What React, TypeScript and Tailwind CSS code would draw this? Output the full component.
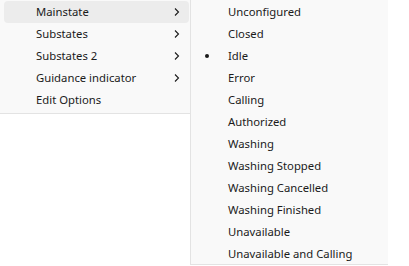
import React from "react";

const mainItems = [
  { label: "Mainstate", sub: true, active: true },
  { label: "Substates", sub: true },
  { label: "Substates 2", sub: true },
  { label: "Guidance indicator", sub: true },
  { label: "Edit Options", sub: false },
];

const stateItems = [
  "Unconfigured",
  "Closed",
  "Idle",
  "Error",
  "Calling",
  "Authorized",
  "Washing",
  "Washing Stopped",
  "Washing Cancelled",
  "Washing Finished",
  "Unavailable",
  "Unavailable and Calling",
];

const Chevron: React.FC = () => (
  <svg width="8" height="10" viewBox="0 0 8 10" className="text-[#1b1b1b]">
    <path d="M2 1.5 L5.5 5 L2 8.5" fill="none" stroke="currentColor" strokeWidth="1.1" />
  </svg>
);

const App: React.FC = () => {
  const selected = "Idle";
  return (
    <div
      className="flex items-start w-[409px] h-[266px] bg-white text-[11.3px] text-[#1b1b1b]"
      style={{ fontFamily: '"Segoe UI", "Noto Sans", sans-serif' }}
    >
      {/* main menu */}
      <div className="w-[190px] h-[114px] bg-[#f9f9f9] border-b border-[#e3e3e3] pt-px">
        {mainItems.map((item) => (
          <div
            key={item.label}
            className={`ml-1 mr-px h-[22px] flex items-center justify-between pl-8 pr-2 rounded ${
              item.active ? "bg-[#ececec]" : ""
            }`}
          >
            <span>{item.label}</span>
            {item.sub && <Chevron />}
          </div>
        ))}
      </div>

      {/* submenu */}
      <div className="w-[198px] h-[265px] bg-[#f9f9f9] border-l border-b border-[#e3e3e3] pt-px">
        {stateItems.map((s) => (
          <div key={s} className="relative h-[22px] flex items-center pl-[37px]">
            {s === selected && (
              <span className="absolute left-[14px] top-[9px] w-[4px] h-[4px] rounded-full bg-[#1b1b1b]" />
            )}
            <span>{s}</span>
          </div>
        ))}
      </div>
    </div>
  );
};

export default App;
